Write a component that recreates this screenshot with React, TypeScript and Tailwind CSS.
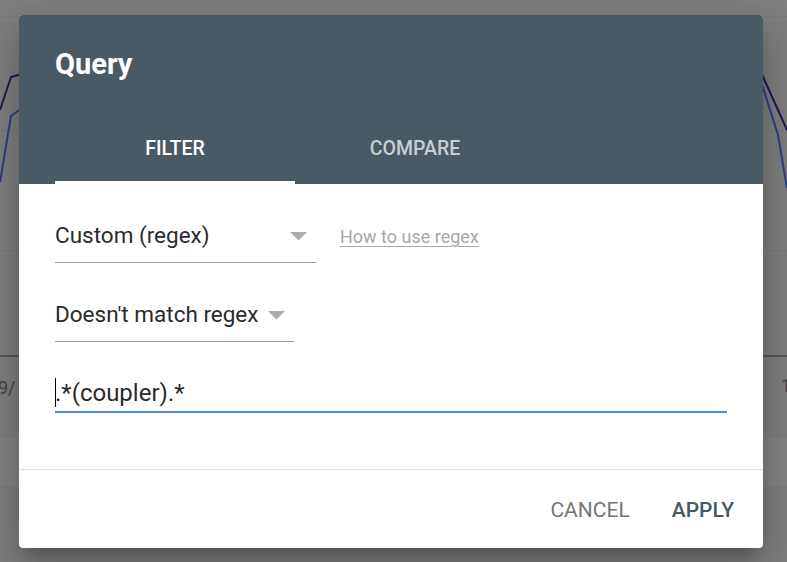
import React from "react";

function Arrow() {
  return (
    <svg width="17" height="9" viewBox="0 0 17 9" className="shrink-0">
      <path d="M0 0 L17 0 L8.5 8.5 Z" fill="#acacac" />
    </svg>
  );
}

function Background() {
  return (
    <svg
      className="absolute inset-0"
      width="787"
      height="562"
      viewBox="0 0 787 562"
    >
      <rect x="0" y="438" width="787" height="48" fill="#858585" />
      <line x1="0" y1="16.5" x2="787" y2="16.5" stroke="#7a7a7a" strokeWidth="1" />
      <line x1="0" y1="130.5" x2="787" y2="130.5" stroke="#7a7a7a" strokeWidth="1" />
      <line x1="0" y1="250.5" x2="787" y2="250.5" stroke="#7a7a7a" strokeWidth="1" />
      <line x1="0" y1="356" x2="787" y2="356" stroke="#5a5a5a" strokeWidth="2" />
      <polyline points="0,110 11,77 22,74" fill="none" stroke="#241a55" strokeWidth="2" />
      <polyline points="0,182 11,116 22,108" fill="none" stroke="#2c4184" strokeWidth="2" />
      <polyline points="760,70 787,130" fill="none" stroke="#241a55" strokeWidth="2" />
      <polyline points="760,78 778,135 787,188" fill="none" stroke="#2c4184" strokeWidth="2" />
      <text x="-2" y="394" fontSize="18" fill="#444" fontFamily="Roboto, sans-serif">9/</text>
      <text x="781" y="392" fontSize="18" fill="#444" fontFamily="Roboto, sans-serif">1</text>
    </svg>
  );
}

export default function App() {
  return (
    <div
      className="relative w-[787px] h-[562px] overflow-hidden bg-[#808080]"
      style={{ fontFamily: "Roboto, 'Liberation Sans', sans-serif" }}
    >
      <Background />
      <div className="absolute left-[19px] top-[15px] w-[744px] h-[533px] rounded-[4px] bg-white overflow-hidden flex flex-col shadow-[0_11px_15px_-7px_rgba(0,0,0,0.2),0_24px_38px_3px_rgba(0,0,0,0.14),0_9px_46px_8px_rgba(0,0,0,0.12)]">
        {/* Header */}
        <div className="bg-[#4a5a65] pt-[32px] flex flex-col">
          <div className="px-[36px] h-[34px] leading-[34px] text-[29px] font-bold text-white">
            Query
          </div>
          <div className="mt-[31px] px-[36px] flex h-[72px]">
            <div className="relative w-[240px] flex items-center justify-center pt-[2px] text-[19.5px] font-medium text-white">
              FILTER
              <div className="absolute left-0 right-0 bottom-0 h-[3px] bg-white" />
            </div>
            <div className="w-[240px] flex items-center justify-center pt-[2px] text-[19.5px] font-medium text-[#c9ced2]">
              COMPARE
            </div>
          </div>
        </div>

        {/* Body */}
        <div className="px-[36px] pt-[26px] flex flex-col">
          <div className="flex items-start">
            <div className="w-[261px] h-[53px] flex items-center justify-between pr-[9px] border-b border-[#9e9e9e]">
              <span className="text-[22.5px] text-[#2b2b2b]">Custom (regex)</span>
              <Arrow />
            </div>
            <a className="ml-[24px] h-[53px] flex items-center text-[18px] text-[#a8a8a8] underline underline-offset-[3px]">
              How to use regex
            </a>
          </div>
          <div className="mt-[26px] w-[239px] h-[53px] flex items-center justify-between pr-[9px] border-b border-[#9e9e9e]">
            <span className="text-[22.5px] text-[#2b2b2b]">Doesn't match regex</span>
            <Arrow />
          </div>
          <div className="mt-[38px] w-[672px] pb-[4px] border-b-[2.5px] border-[#5a86e3] flex items-center">
            <div className="relative h-[27px] leading-[27px] text-[24px] text-[#2b2b2b]">
              <span className="absolute left-0 top-[-2px] w-[1px] h-[29px] bg-black" />
              .*(coupler).*
            </div>
          </div>
        </div>

        <div className="mt-[56px] border-t border-[#e0e0e0]" />

        {/* Footer */}
        <div className="flex-1 flex items-center justify-end pt-[4px] pr-[29px] gap-[42px]">
          <span className="text-[21px] text-[#757575]">CANCEL</span>
          <span className="text-[21px] font-medium text-[#455a64]">APPLY</span>
        </div>
      </div>
    </div>
  );
}
